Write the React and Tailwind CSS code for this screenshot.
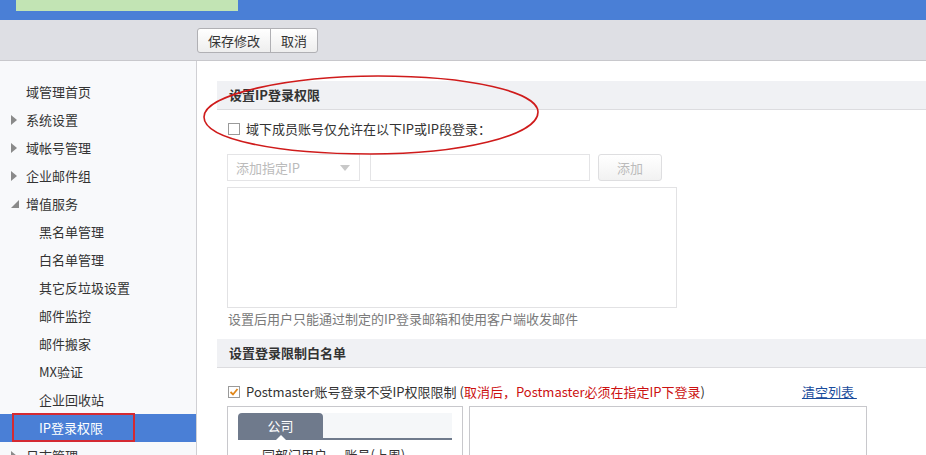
import React from "react";

const font = { fontFamily: '"Noto Sans CJK SC", "Noto Sans", sans-serif' };

function TriRight() {
  return (
    <svg width="6" height="10" viewBox="0 0 6 10" className="shrink-0">
      <path d="M0 0 L6 5 L0 10 Z" fill="#8a8a8a" />
    </svg>
  );
}
function TriDown() {
  return (
    <svg width="8" height="8" viewBox="0 0 8 8" className="shrink-0">
      <path d="M8 0 L8 8 L0 8 Z" fill="#8a8a8a" />
    </svg>
  );
}

function NavItem({ label, level, arrow, selected }) {
  return (
    <div
      className={`relative h-[28px] flex items-center ${selected ? "bg-[#4a7fd6] text-white" : "text-[#333]"}`}
    >
      {level === 0 ? (
        <div className="flex items-center">
          <div className="w-[26px] flex justify-start pl-[11px]">
            {arrow === "right" && <TriRight />}
            {arrow === "down" && <TriDown />}
          </div>
          <span>{label}</span>
        </div>
      ) : (
        <span className="pl-[39px]">{label}</span>
      )}
      {selected && (
        <div className="absolute left-[12px] top-[-1px] w-[123px] h-[29px] border-2 border-[#d42a32]" />
      )}
    </div>
  );
}

function CheckBox({ checked }) {
  return (
    <svg width="12" height="12" viewBox="0 0 12 12" className="shrink-0">
      <rect x="0.5" y="0.5" width="11" height="11" fill="#fff" stroke="#9a9a9a" />
      {checked && (
        <path d="M2.5 6 L5 8.5 L9.5 3" fill="none" stroke="#e0861a" strokeWidth="1.8" />
      )}
    </svg>
  );
}

export default function App() {
  const nav = [
    { label: "域管理首页", level: 0 },
    { label: "系统设置", level: 0, arrow: "right" },
    { label: "域帐号管理", level: 0, arrow: "right" },
    { label: "企业邮件组", level: 0, arrow: "right" },
    { label: "增值服务", level: 0, arrow: "down" },
    { label: "黑名单管理", level: 1 },
    { label: "白名单管理", level: 1 },
    { label: "其它反垃圾设置", level: 1 },
    { label: "邮件监控", level: 1 },
    { label: "邮件搬家", level: 1 },
    { label: "MX验证", level: 1 },
    { label: "企业回收站", level: 1 },
    { label: "IP登录权限", level: 1, selected: true },
    { label: "日志管理", level: 0, arrow: "right" },
  ];

  return (
    <div className="relative w-[926px] h-[455px] overflow-hidden bg-white text-[13px] text-[#333]" style={font}>
      {/* top bar */}
      <div className="h-[20px] bg-[#4a7fd6]">
        <div className="ml-[16px] w-[222px] h-[11px] bg-[#c2e4b4]" />
      </div>
      {/* toolbar */}
      <div className="h-[41px] bg-[#dedfe4] border-b border-[#c8c8cc] pl-[197px] pt-[8px]">
        <div className="flex h-[25px] w-fit rounded-[3px] border border-[#b0b0b4] bg-gradient-to-b from-white to-[#eeeeee] overflow-hidden">
          <div className="px-[10px] flex items-center border-r border-[#b0b0b4]">保存修改</div>
          <div className="px-[10px] flex items-center">取消</div>
        </div>
      </div>

      <div className="flex h-[394px]">
        {/* sidebar */}
        <div className="w-[197px] shrink-0 bg-[#f8f9fb] border-r border-[#d0d0d4] pt-[17px]">
          {nav.map((n) => (
            <NavItem key={n.label} {...n} />
          ))}
        </div>

        {/* main */}
        <div className="flex-1 pl-[20px] pt-[20px]">
          <div className="h-[29px] bg-[#f0f1f4] border-b border-[#dcdcdf] pl-[12px] flex items-center font-bold">
            设置IP登录权限
          </div>
          <div className="mt-[9px] h-[20px] pl-[11px] flex items-center gap-[6px]">
            <CheckBox />
            <span>域下成员账号仅允许在以下IP或IP段登录：</span>
          </div>
          <div className="mt-[15px] ml-[10px] flex items-center">
            <div className="w-[133px] h-[27px] border border-[#e4e4e6] flex items-center justify-between pl-[8px] pr-[9px] text-[#bbbbbb]">
              <span>添加指定IP</span>
              <svg width="10" height="6" viewBox="0 0 10 6">
                <path d="M0 0 L10 0 L5 6 Z" fill="#c8c8c8" />
              </svg>
            </div>
            <div className="ml-[10px] w-[220px] h-[27px] border border-[#e4e4e6]" />
            <div className="ml-[8px] w-[64px] h-[27px] border border-[#dedee0] rounded-[3px] bg-gradient-to-b from-white to-[#f2f2f2] flex items-center justify-center text-[#bbbbbb]">
              添加
            </div>
          </div>
          <div className="mt-[6px] ml-[10px] w-[450px] h-[121px] border border-[#e2e2e4]" />
          <div className="mt-[2px] ml-[11px] leading-[18px] text-[#7a7a7a]">
            设置后用户只能通过制定的IP登录邮箱和使用客户端收发邮件
          </div>

          <div className="mt-[11px] h-[29px] bg-[#f0f1f4] border-b border-[#dcdcdf] pl-[12px] flex items-center font-bold">
            设置登录限制白名单
          </div>
          <div className="mt-[14px] h-[20px] pl-[11px] flex items-center">
            <CheckBox checked />
            <span className="ml-[6px]">Postmaster账号登录不受IP权限限制 (</span>
            <span className="text-[#cc1111]">取消后，Postmaster必须在指定IP下登录</span>
            <span>)</span>
            <span className="ml-[97px] text-[#1a4c9c] underline">清空列表&nbsp;</span>
          </div>
          <div className="mt-[4px] ml-[10px] flex gap-[6px]">
            <div className="w-[236px] h-[100px] border border-[#c8c8cc] pt-[6px] px-[10px]">
              <div className="flex h-[27px] border-b-2 border-[#6f7a8c]">
                <div className="relative w-[85px] bg-[#6f7a8c] rounded-t-[4px] text-white flex items-center justify-center">
                  公司
                  <svg width="10" height="5" viewBox="0 0 10 5" className="absolute left-[38px] bottom-[-2px]">
                    <path d="M0 5 L5 0 L10 5 Z" fill="#fff" />
                  </svg>
                </div>
                <div className="flex-1 bg-[#f5f7f9]" />
              </div>
              <div className="mt-[5px] pl-[24px] whitespace-nowrap">同部门用户 — 账号(上周)</div>
            </div>
            <div className="w-[398px] h-[100px] border border-[#c8c8cc]" />
          </div>
        </div>
      </div>

      {/* red ellipse annotation */}
      <svg className="absolute left-0 top-0 pointer-events-none" width="926" height="455">
        <path
          d="M204 117 C204 94 290 76 378 76 C470 76 538 92 538 112 C538 136 460 154 370 154 C280 154 204 140 204 117 Z"
          fill="none"
          stroke="#cf1b1b"
          strokeWidth="1.6"
        />
      </svg>
    </div>
  );
}
